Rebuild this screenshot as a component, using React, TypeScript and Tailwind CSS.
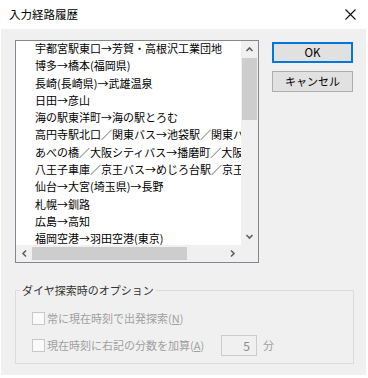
import React from 'react';

const routes = [
  '宇都宮駅東口→芳賀・高根沢工業団地',
  '博多→橋本(福岡県)',
  '長崎(長崎県)→武雄温泉',
  '日田→彦山',
  '海の駅東洋町→海の駅とろむ',
  '高円寺駅北口／関東バス→池袋駅／関東バス',
  'あべの橋／大阪シティバス→播磨町／大阪シティバス',
  '八王子車庫／京王バス→めじろ台駅／京王バス',
  '仙台→大宮(埼玉県)→長野',
  '札幌→釧路',
  '広島→高知',
  '福岡空港→羽田空港(東京)',
];

const font = { fontFamily: '"Noto Sans CJK JP", "Noto Sans", sans-serif' };

function Chevron({ dir }: { dir: 'up' | 'down' | 'left' | 'right' }) {
  const d = {
    up: 'M1.5 6 L4.5 3 L7.5 6',
    down: 'M1.5 3 L4.5 6 L7.5 3',
    left: 'M6 1.5 L3 4.5 L6 7.5',
    right: 'M3 1.5 L6 4.5 L3 7.5',
  }[dir];
  return (
    <svg width="9" height="9" viewBox="0 0 9 9">
      <path d={d} fill="none" stroke="#606060" strokeWidth="1.6" />
    </svg>
  );
}

function Checkbox() {
  return <div className="w-[13px] h-[13px] border border-[#c8c8c8] bg-[#fafafa] shrink-0" />;
}

export default function App() {
  return (
    <div className="w-[368px] h-[378px] bg-white flex flex-col text-[11px]" style={font}>
      {/* title bar */}
      <div className="h-[29px] flex items-center justify-between pl-[9px] pr-[12px] text-[11.5px] text-black">
        <span>入力経路履歴</span>
        <svg width="11" height="11" viewBox="0 0 11 11">
          <path d="M0.5 0.5 L10.5 10.5 M10.5 0.5 L0.5 10.5" stroke="#111" strokeWidth="1.1" />
        </svg>
      </div>

      {/* body */}
      <div className="ml-[1px] mr-[2px] h-[346px] bg-[#f0f0f0] pt-[11px] pl-[14px]">
        <div className="flex">
          {/* list box */}
          <div className="w-[244px] h-[223px] border border-[#828790] bg-white flex flex-col">
            <div className="flex h-[204px]">
              <div className="w-[225px] overflow-hidden pl-[19px] leading-[17.3px] text-black whitespace-nowrap">
                <div className="-mt-[1px]">
                  {routes.map((r) => (
                    <div key={r}>{r}</div>
                  ))}
                </div>
              </div>
              <div className="w-[17px] bg-[#f0f0f0] flex flex-col">
                <div className="h-[17px] flex items-center justify-center">
                  <Chevron dir="up" />
                </div>
                <div className="flex-1 px-[1px]">
                  <div className="h-[62px] bg-[#cdcdcd]" />
                </div>
                <div className="h-[17px] flex items-center justify-center">
                  <Chevron dir="down" />
                </div>
              </div>
            </div>
            <div className="flex h-[17px]">
              <div className="w-[225px] bg-[#f0f0f0] flex items-center">
                <div className="w-[16px] flex items-center justify-center">
                  <Chevron dir="left" />
                </div>
                <div className="h-[13px] w-[155px] bg-[#cdcdcd]" />
                <div className="flex-1" />
                <div className="w-[17px] flex items-center justify-center">
                  <Chevron dir="right" />
                </div>
              </div>
              <div className="w-[17px] bg-[#f0f0f0]" />
            </div>
          </div>

          {/* buttons */}
          <div className="ml-[13px] mt-[2px] flex flex-col gap-[8px]">
            <button className="w-[81px] h-[21px] border-2 border-[#0078d7] bg-[#e1e1e1] text-black text-[11.5px] flex items-center justify-center">
              OK
            </button>
            <button className="w-[81px] h-[21px] border border-[#adadad] bg-[#e1e1e1] text-black flex items-center justify-center">
              キャンセル
            </button>
          </div>
        </div>

        {/* options group */}
        <fieldset className="mt-[20px] w-[339px] border border-[#dcdcdc] pl-[16px] pb-[7px]">
          <legend className="-ml-[12px] px-[2px] leading-[14px] text-[#333]">ダイヤ探索時のオプション</legend>
          <div className="mt-[13px] h-[16px] flex items-center text-[#a0a0a0]">
            <Checkbox />
            <span className="ml-[2px]">
              常に現在時刻で出発探索(<span className="underline">N</span>)
            </span>
          </div>
          <div className="mt-[9px] h-[21px] flex items-center text-[#a0a0a0]">
            <Checkbox />
            <span className="ml-[2px] w-[174px]">
              現在時刻に右記の分数を加算(<span className="underline">A</span>)
            </span>
            <div className="w-[36px] h-[21px] border border-[#cccccc] bg-[#f0f0f0] flex items-center justify-end pr-[6px] text-[#8a8a8a] text-[12px]">
              5
            </div>
            <span className="ml-[6px]">分</span>
          </div>
        </fieldset>
      </div>
      <div className="h-[3px] bg-white" />
    </div>
  );
}
